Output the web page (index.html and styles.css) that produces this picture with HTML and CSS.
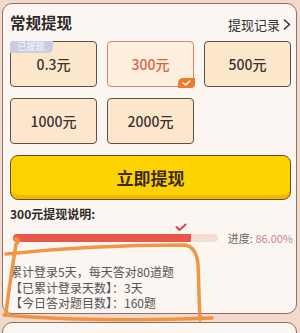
FILE: index.html
```html
<!DOCTYPE html>
<html lang="zh">
<head>
<meta charset="utf-8">
<link rel="stylesheet" href="styles.css">
</head>
<body>
<div class="page">
  <section class="card">
    <header class="head">
      <h1 class="title">常规提现</h1>
      <a class="record">提现记录<svg class="chev" width="8" height="11" viewBox="0 0 8 11"><path d="M1.5 1 L6.5 5.5 L1.5 10" fill="none" stroke="#333" stroke-width="1.6" stroke-linecap="round" stroke-linejoin="round"/></svg></a>
    </header>
    <div class="grid">
      <div class="opt"><span class="done">已提现</span>0.3元</div>
      <div class="opt sel">300元<span class="tick"><svg width="9" height="6" viewBox="0 0 9 6"><path d="M1 3 L3.5 5 L8 1" fill="none" stroke="#fff" stroke-width="1.4" stroke-linecap="round" stroke-linejoin="round"/></svg></span></div>
      <div class="opt">500元</div>
      <div class="opt">1000元</div>
      <div class="opt">2000元</div>
    </div>
    <button class="btn">立即提现</button>
    <h2 class="sub">300元提现说明:</h2>
    <div class="prog">
      <div class="track"><div class="fill" style="width:87%"><svg class="mark" width="12" height="9" viewBox="0 0 12 9"><path d="M1.5 4 L4.5 7 L10.5 1.5" fill="none" stroke="#d9434a" stroke-width="2" stroke-linecap="round" stroke-linejoin="round"/></svg></div></div>
      <span class="pct">进度: <em>86.00%</em></span>
    </div>
    <div class="desc">
      <p>累计登录5天，每天答对80道题</p>
      <p>【已累计登录天数】：3天</p>
      <p>【今日答对题目数】：160题</p>
    </div>
    <svg class="scribble" width="215" height="95" viewBox="0 0 215 95">
      <path d="M13 5 C16 3 18 8 14 10 C11 30 6 60 4 80 M4 20 C60 14 130 11 182 11 C192 12 195 20 196 30 C197 50 197 70 198 86 M2 81 C60 86 140 87 210 84" fill="none" stroke="#f0903a" stroke-width="3.5" stroke-linecap="round" stroke-linejoin="round" opacity="0.95"/>
    </svg>
  </section>
  <section class="card card2"></section>
</div>
</body>
</html>
```
FILE: styles.css
```css
* { box-sizing: border-box; margin: 0; padding: 0; }
html, body { width: 300px; height: 333px; overflow: hidden; }
body {
  background: #f3d9cb;
  font-family: "Noto Sans CJK SC", "Noto Sans", sans-serif;
  color: #333;
}
.page { height: 333px; overflow: hidden; padding: 3px 3px 0 2px; display: flex; flex-direction: column; gap: 8px; }
.card {
  position: relative;
  flex: none;
  height: 311px;
  background: #fcf6f3;
  border: 1.5px solid #8c7062;
  border-radius: 10px;
  padding: 6px 3px 0 7px;
}
.card2 { height: 40px; padding: 0; }
.head { display: flex; justify-content: space-between; align-items: center; height: 24px; padding-right: 2px; }
.title { font-size: 15.5px; font-weight: 700; color: #2e2a28; line-height: 20px; }
.record { font-size: 13px; color: #333; display: flex; align-items: center; gap: 3px; margin-top: 4px; }
.chev { display: block; }
.grid {
  margin-top: 7px;
  display: grid;
  grid-template-columns: repeat(3, 87px);
  grid-auto-rows: 46px;
  column-gap: 10px;
  row-gap: 11px;
}
.opt {
  position: relative;
  background: #fde7cc;
  border: 1.5px solid #5f5046;
  border-radius: 4px;
  display: flex; align-items: center; justify-content: center;
  font-size: 14px; color: #3a332e; font-weight: 500;
}
.opt.sel { background: #fdeedd; border-color: #d9866a; color: #d9643c; }
.done {
  position: absolute; left: -1.5px; top: -1.5px;
  width: 43px; height: 12px;
  background: #c8cde0; color: #f4f4fa;
  font-size: 9px; line-height: 12px; text-align: center;
  border-radius: 4px 0 5px 0;
}
.tick {
  position: absolute; right: -1.5px; bottom: -1.5px;
  width: 17px; height: 10px;
  background: #ef7a2e;
  border-radius: 5px 0 4px 0;
  display: flex; align-items: center; justify-content: center;
}
.btn {
  margin-top: 11px;
  width: 281px; height: 45px;
  background: #ffd300;
  border: 1.5px solid #6a4a2c;
  border-radius: 8px;
  box-shadow: inset 0 -4px 0 #f0b800;
  font-family: inherit;
  font-size: 17px; font-weight: 700; color: #3b2a1c;
  display: block;
}
.sub { margin-top: 6px; font-size: 12px; font-weight: 700; color: #2e2a28; line-height: 16px; }
.prog { margin-top: 10px; display: flex; align-items: center; gap: 10px; padding-left: 3px; height: 12px; }
.track { width: 211px; height: 8px; background: #f2ddd0; border-radius: 4px; }
.fill { position: relative; height: 8px; background: #e8584a; border-radius: 4px 0 0 4px; }
.mark { position: absolute; right: 4px; top: -11px; }
.pct { font-size: 11px; color: #6e6660; white-space: nowrap; }
.pct em { font-style: normal; color: #c8868e; }
.desc { margin-top: 20px; font-size: 12px; color: #555; line-height: 15.5px; }
.scribble { position: absolute; left: -1px; top: 230px; pointer-events: none; }
```
